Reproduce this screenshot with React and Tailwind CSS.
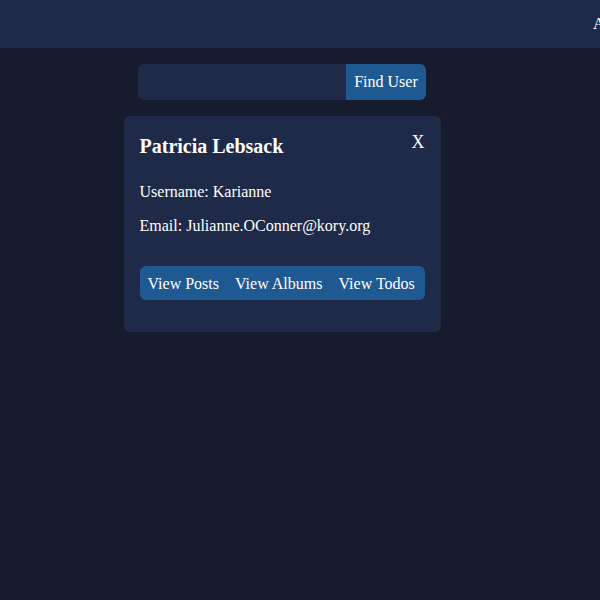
import React, { useState } from "react";

export default function App() {
  const [query, setQuery] = useState("");
  const [open, setOpen] = useState(true);

  const user = {
    name: "Patricia Lebsack",
    username: "Karianne",
    email: "Julianne.OConner@kory.org",
  };

  return (
    <div
      className="min-h-[600px] w-[600px] overflow-hidden bg-[#161b2e] text-white"
      style={{ fontFamily: '"Liberation Serif", "Times New Roman", serif' }}
    >
      {/* header */}
      <div className="h-12 bg-[#1f2a48] flex items-center overflow-hidden whitespace-nowrap">
        <div className="pl-[593px] text-base">About</div>
      </div>

      <div className="w-[564px] flex flex-col items-center pt-4">
        {/* search */}
        <div className="flex h-9 w-[288px]">
          <input
            type="text"
            value={query}
            onChange={(e) => setQuery(e.target.value)}
            className="w-[208px] h-9 bg-[#1f2a48] rounded-l-md px-2 text-white outline-none"
          />
          <button className="w-20 h-9 bg-[#1f5991] rounded-r-md px-2 text-base">
            Find User
          </button>
        </div>

        {/* user card */}
        {open && (
          <div className="mt-4 w-[317px] bg-[#1f2a48] rounded-md px-4 pt-4 pb-8">
            <div className="flex justify-between items-start">
              <h2 className="text-xl leading-7 font-bold">{user.name}</h2>
              <button
                onClick={() => setOpen(false)}
                className="text-lg leading-6 -mt-[2px]"
              >
                X
              </button>
            </div>
            <p className="mt-5 leading-6">Username: {user.username}</p>
            <p className="mt-2.5 leading-6">Email: {user.email}</p>

            <div className="mt-7 flex bg-[#1f5991] rounded-md pt-[6px] pb-[4px]">
              <button className="px-2 leading-6">View Posts</button>
              <button className="px-2 leading-6">View Albums</button>
              <button className="px-2 leading-6">View Todos</button>
            </div>
          </div>
        )}
      </div>
    </div>
  );
}
